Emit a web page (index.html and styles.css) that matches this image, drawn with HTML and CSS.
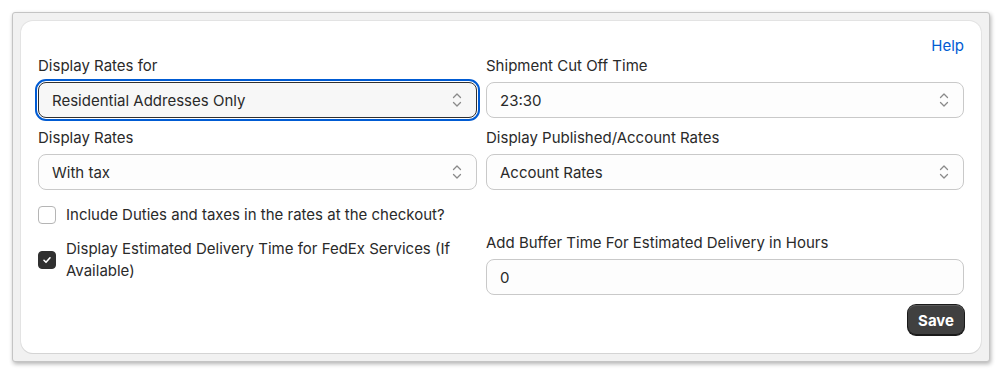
FILE: index.html
```html
<!DOCTYPE html>
<html lang="en">

<head>
    <meta charset="UTF-8">
    <meta name="viewport" content="width=device-width, initial-scale=1.0">
    <title>Rate Settings</title>
    <link rel="stylesheet" href="styles.css">
</head>

<body>
    <div class="frame">
        <div class="card">
            <div class="help-row">
                <a class="help-link" href="#">Help</a>
            </div>

            <div class="form-grid">
                <div class="field">
                    <label class="field-label">Display Rates for</label>
                    <div class="select focused">
                        <span class="select-value">Residential Addresses Only</span>
                        <svg class="select-icon" viewBox="0 0 10 16" width="10" height="16">
                            <path d="M1.5 5.5 5 2l3.5 3.5M1.5 10.5 5 14l3.5-3.5" fill="none" stroke="#8a8a8a" stroke-width="1.3" stroke-linecap="round" stroke-linejoin="round"/>
                        </svg>
                    </div>
                </div>
                <div class="field">
                    <label class="field-label">Shipment Cut Off Time</label>
                    <div class="select">
                        <span class="select-value">23:30</span>
                        <svg class="select-icon" viewBox="0 0 10 16" width="10" height="16">
                            <path d="M1.5 5.5 5 2l3.5 3.5M1.5 10.5 5 14l3.5-3.5" fill="none" stroke="#8a8a8a" stroke-width="1.3" stroke-linecap="round" stroke-linejoin="round"/>
                        </svg>
                    </div>
                </div>

                <div class="field">
                    <label class="field-label">Display Rates</label>
                    <div class="select">
                        <span class="select-value">With tax</span>
                        <svg class="select-icon" viewBox="0 0 10 16" width="10" height="16">
                            <path d="M1.5 5.5 5 2l3.5 3.5M1.5 10.5 5 14l3.5-3.5" fill="none" stroke="#8a8a8a" stroke-width="1.3" stroke-linecap="round" stroke-linejoin="round"/>
                        </svg>
                    </div>
                </div>
                <div class="field">
                    <label class="field-label">Display Published/Account Rates</label>
                    <div class="select">
                        <span class="select-value">Account Rates</span>
                        <svg class="select-icon" viewBox="0 0 10 16" width="10" height="16">
                            <path d="M1.5 5.5 5 2l3.5 3.5M1.5 10.5 5 14l3.5-3.5" fill="none" stroke="#8a8a8a" stroke-width="1.3" stroke-linecap="round" stroke-linejoin="round"/>
                        </svg>
                    </div>
                </div>
            </div>

            <div class="options-grid">
                <div class="checks">
                    <label class="check-row">
                        <span class="checkbox"></span>
                        <span class="check-text">Include Duties and taxes in the rates at the checkout?</span>
                    </label>
                    <label class="check-row">
                        <span class="checkbox checked">
                            <svg viewBox="0 0 12 12" width="12" height="12">
                                <path d="M3 6.3 5 8.3 9 3.8" fill="none" stroke="#fff" stroke-width="1.6" stroke-linecap="round" stroke-linejoin="round"/>
                            </svg>
                        </span>
                        <span class="check-text">Display Estimated Delivery Time for FedEx Services (If Available)</span>
                    </label>
                </div>
                <div class="field buffer-field">
                    <label class="field-label">Add Buffer Time For Estimated Delivery in Hours</label>
                    <div class="text-input">0</div>
                    <div class="actions">
                        <button class="save-btn">Save</button>
                    </div>
                </div>
            </div>
        </div>
    </div>
</body>

</html>
```

FILE: styles.css
```css
:root {
    --text-color: #2a2a2a;
    --link-color: #005bd3;
    --border-color: #c9c9c9;
    --frame-bg: #f1f1f1;
}

body {
    font-family: Inter, "Noto Sans", sans-serif;
    font-size: 15px;
    margin: 0;
    padding: 12px;
    background-color: #ffffff;
    color: var(--text-color);
}

.frame {
    width: 978px;
    height: 350px;
    box-sizing: border-box;
    padding: 8px;
    background-color: var(--frame-bg);
    border: 1px solid #c4c4c4;
    border-radius: 3px;
    box-shadow: 1px 2px 4px rgba(0, 0, 0, 0.3);
}

.card {
    height: 332px;
    box-sizing: border-box;
    padding: 15px 17px 0 17px;
    background-color: #ffffff;
    border-radius: 12px;
    box-shadow: 0 1px 0 #d4d4d4, 0 0 0 1px #e3e3e3;
}

.help-row {
    display: flex;
    justify-content: flex-end;
    height: 20px;
    line-height: 20px;
}

.help-link {
    color: var(--link-color);
    text-decoration: none;
}

.form-grid {
    display: grid;
    grid-template-columns: 439px 1fr;
    column-gap: 9px;
    row-gap: 10px;
}

.field {
    display: flex;
    flex-direction: column;
}

.field-label {
    line-height: 20px;
    margin-bottom: 6px;
}

.select {
    height: 36px;
    box-sizing: border-box;
    display: flex;
    align-items: center;
    justify-content: space-between;
    padding: 0 14px 0 13px;
    border: 1px solid var(--border-color);
    border-radius: 8px;
    background-color: #fdfdfd;
}

.select.focused {
    background-color: #f7f7f7;
    border-color: #303030;
    outline: 2px solid var(--link-color);
    outline-offset: 1px;
}

.select-icon {
    flex-shrink: 0;
}

.options-grid {
    display: grid;
    grid-template-columns: 439px 1fr;
    column-gap: 9px;
    align-items: start;
    margin-top: 14px;
}

.checks {
    display: flex;
    flex-direction: column;
    gap: 12px;
}

.check-row {
    display: flex;
    align-items: center;
    gap: 10px;
}

.check-text {
    line-height: 22px;
    max-width: 400px;
}

.checkbox {
    width: 18px;
    height: 18px;
    box-sizing: border-box;
    flex-shrink: 0;
    border: 1px solid #b5b5b5;
    border-radius: 4px;
    background-color: #ffffff;
    display: flex;
    align-items: center;
    justify-content: center;
}

.checkbox.checked {
    background-color: #303030;
    border-color: #303030;
}

.buffer-field {
    margin-top: 29px;
}

.text-input {
    height: 36px;
    box-sizing: border-box;
    display: flex;
    align-items: center;
    padding: 0 13px;
    border: 1px solid var(--border-color);
    border-radius: 8px;
    background-color: #fdfdfd;
}

.actions {
    display: flex;
    justify-content: flex-end;
    margin-top: 10px;
}

.save-btn {
    font-family: Inter, "Noto Sans", sans-serif;
    font-size: 15px;
    font-weight: 700;
    color: #ffffff;
    height: 30px;
    padding: 0 10px;
    border: none;
    border-radius: 8px;
    background-color: #404040;
    box-shadow: inset 0 -1px 0 #1a1a1a, inset 0 1px 0 #5a5a5a, 0 0 0 1px #1a1a1a;
}
```
